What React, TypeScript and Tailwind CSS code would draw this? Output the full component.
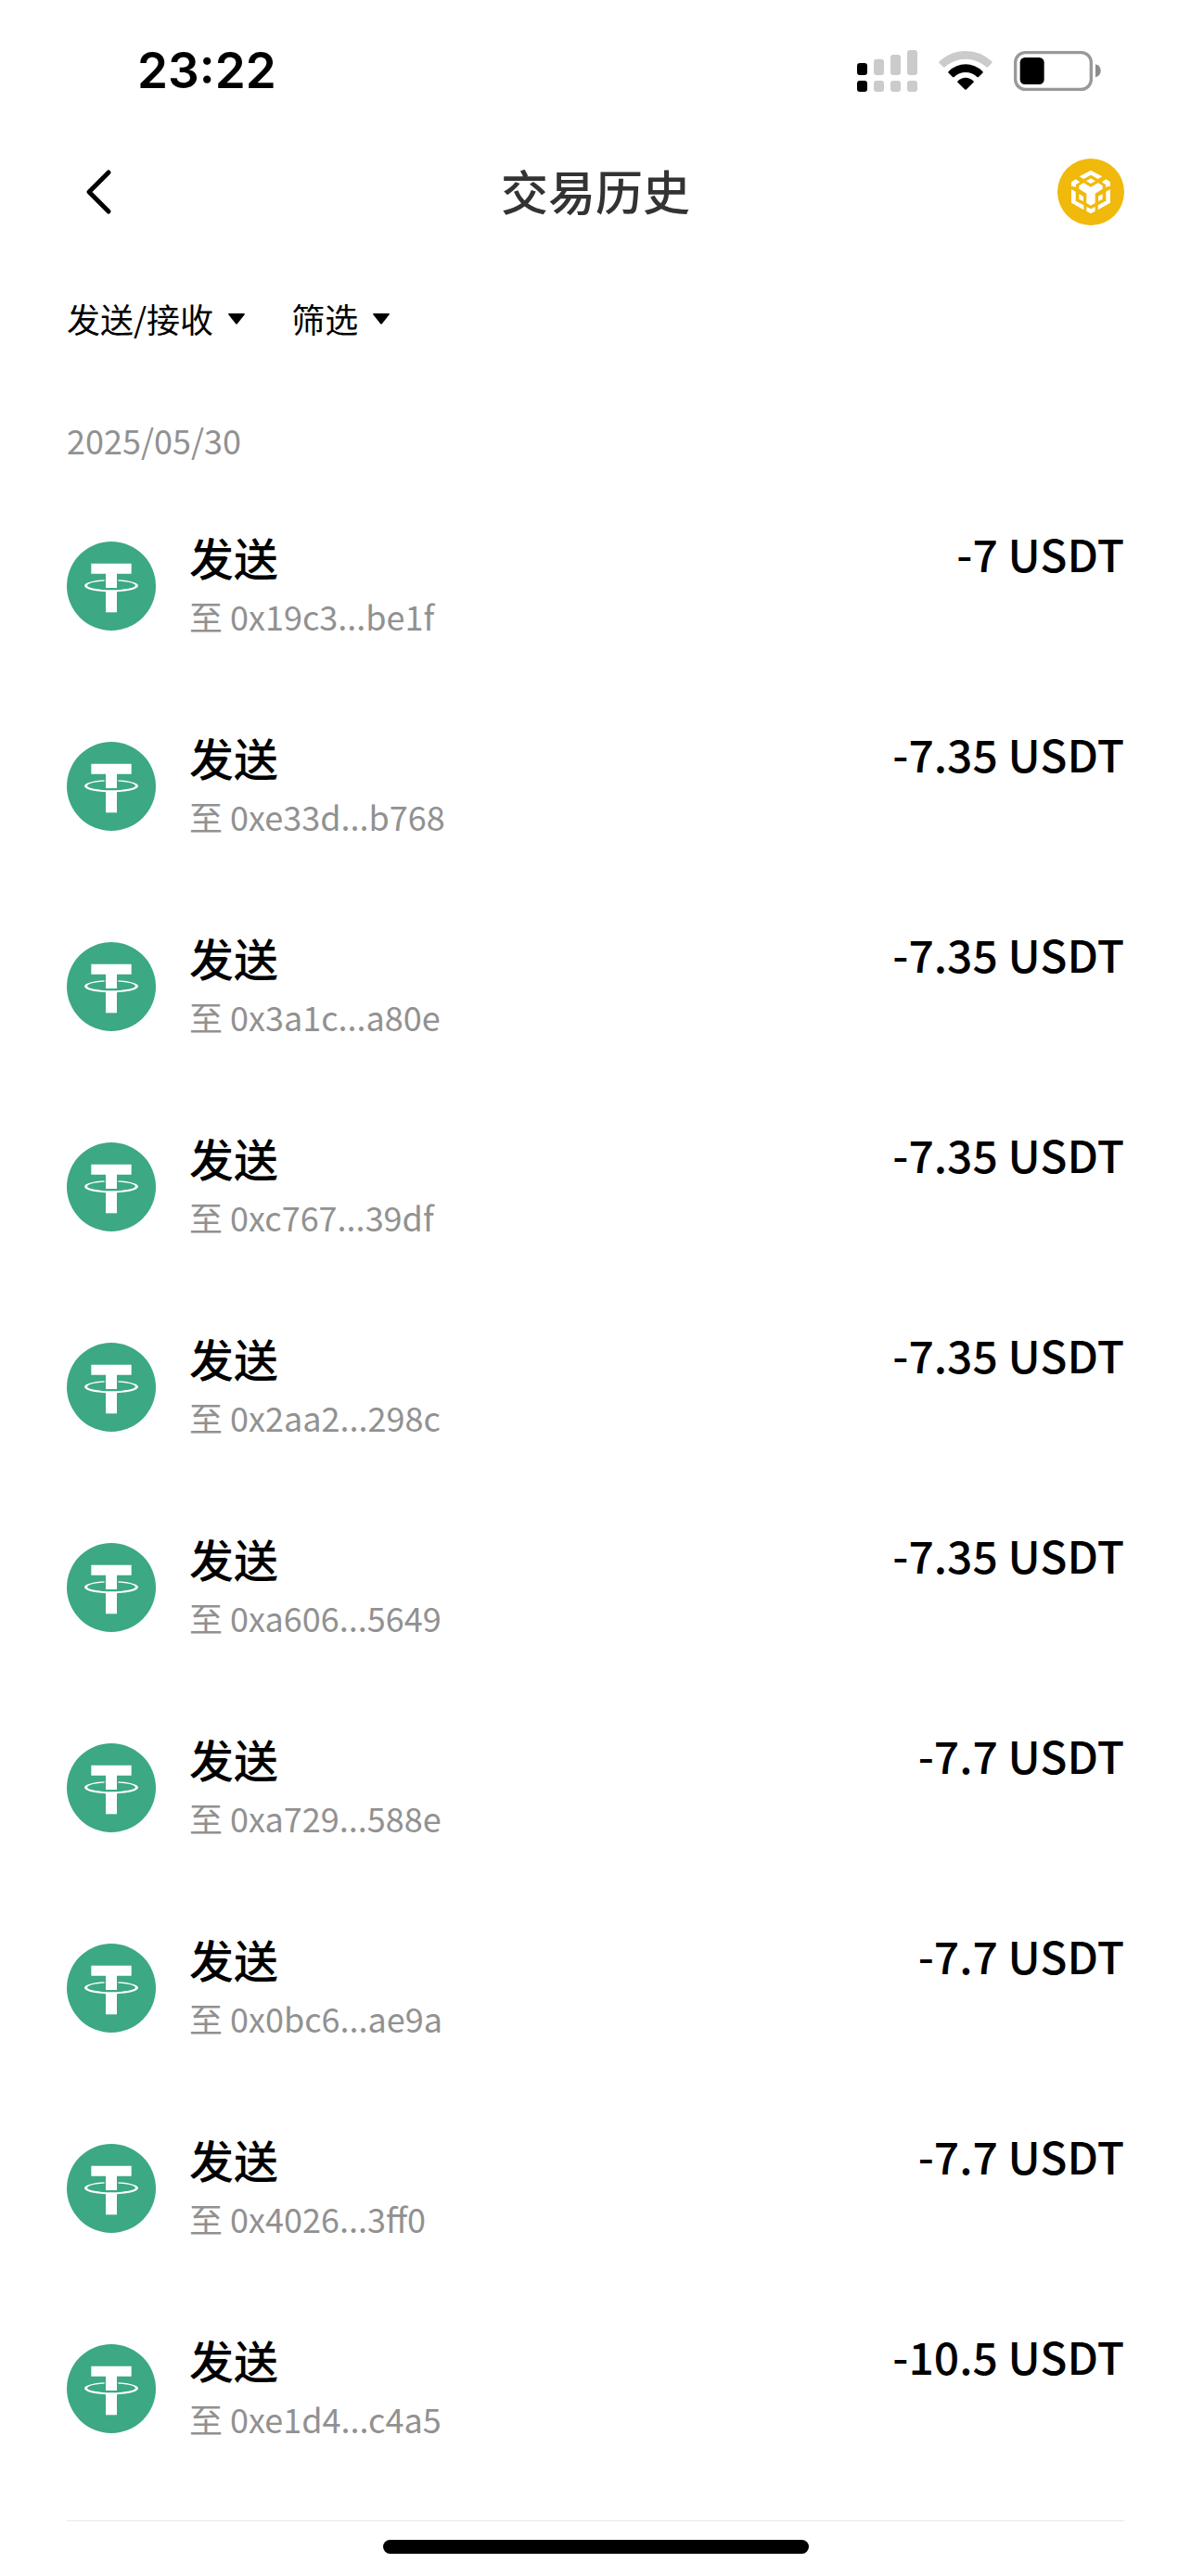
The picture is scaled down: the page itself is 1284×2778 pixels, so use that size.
import React from "react";

interface Transaction {
  address: string;
  amount: string;
}

const transactions: Transaction[] = [
  { address: "0x19c3...be1f", amount: "-7" },
  { address: "0xe33d...b768", amount: "-7.35" },
  { address: "0x3a1c...a80e", amount: "-7.35" },
  { address: "0xc767...39df", amount: "-7.35" },
  { address: "0x2aa2...298c", amount: "-7.35" },
  { address: "0xa606...5649", amount: "-7.35" },
  { address: "0xa729...588e", amount: "-7.7" },
  { address: "0x0bc6...ae9a", amount: "-7.7" },
  { address: "0x4026...3ff0", amount: "-7.7" },
  { address: "0xe1d4...c4a5", amount: "-10.5" },
];

const SignalIcon = () => (
  <svg className="w-[65px] h-[45px]" viewBox="0 0 195 135" aria-hidden="true">
    <g fill="#000">
      <rect x="0" y="42" width="33" height="39" rx="9" />
      <rect x="0" y="99" width="33" height="36" rx="9" />
    </g>
    <g fill="#cbcbcb">
      <rect x="54" y="29" width="33" height="52" rx="9" />
      <rect x="108" y="15" width="33" height="66" rx="9" />
      <rect x="162" y="0" width="33" height="81" rx="9" />
      <rect x="54" y="99" width="33" height="36" rx="9" />
      <rect x="108" y="99" width="33" height="36" rx="9" />
      <rect x="162" y="99" width="33" height="36" rx="9" />
    </g>
  </svg>
);

const WifiIcon = () => (
  <svg className="w-[58px] h-[42px]" viewBox="0 0 174 126" aria-hidden="true">
    <path
      fill="#cbcbcb"
      d="M2 34 Q38 0 87 0 Q136 0 172 34 Q174 37 172 39 L159 52 Q156 54 154 52 Q125 26 87 26 Q49 26 20 52 Q18 54 15 52 L2 39 Q0 37 2 34Z"
    />
    <path
      d="M32 66 Q56 43 87 43 Q118 43 142 66 Q145 69 142 71 L129 84 Q126 86 124 84 Q108 69 87 69 Q66 69 50 84 Q48 86 45 84 L32 71 Q29 69 32 66Z"
    />
    <path
      d="M62 97 Q73 86 87 86 Q101 86 112 97 Q115 100 112 102 L90 124 Q87 127 84 124 L62 102 Q59 100 62 97Z"
    />
  </svg>
);

const BatteryIcon = () => (
  <svg className="w-[94px] h-[43px]" viewBox="0 0 282 129" aria-hidden="true">
    <rect x="5" y="5" width="245" height="119" rx="32" fill="none" stroke="#999" strokeWidth="10" />
    <rect x="20" y="21" width="78" height="87" rx="16" />
    <path d="M264 43 Q281 48 281 64 Q281 80 264 85Z" fill="#8c8c8c" />
  </svg>
);

const BnbChainIcon = () => (
  <svg className="w-[72px] h-[72px]" viewBox="0 0 216 216" aria-hidden="true">
    <circle cx="108" cy="108" r="108" fill="#f0b90b" />
    <g fill="#fff">
      <path d="M108 38L145 58L131 66L108 53L85 66L71 58Z" />
      <path d="M108 64L123 73L108 81L93 73Z" />
      <path d="M45 76L59 67L73 76L60 84V92L45 89Z" />
      <path d="M171 76L157 67L143 76L156 84V92L171 89Z" />
      <path d="M70 87L85 79L108 92L131 79L146 87V98L122 113V144L108 152L94 144V113L70 98Z" />
      <path d="M70 115L84 122V138L70 131Z" />
      <path d="M146 115L132 122V138L146 131Z" />
      <path d="M45 99L59 107V137L85 151V166L45 143Z" />
      <path d="M171 99L157 107V137L131 151V166L171 143Z" />
      <path d="M94 156L108 163L122 156V170L108 178L94 170Z" />
    </g>
  </svg>
);

const TetherIcon = () => (
  <svg className="w-24 h-24 shrink-0" viewBox="0 0 288 288" aria-hidden="true">
    <circle cx="144" cy="144" r="144" fill="#3ca884" />
    <path
      fill="#fff"
      fillRule="evenodd"
      d="M57 143a87 20 0 1 0 174 0a87 20 0 1 0 -174 0ZM66 142a78 15 0 1 0 156 0a78 15 0 1 0 -156 0Z"
    />
    <path d="M122 104H166V151H122Z" fill="#3ca884" />
    <path d="M79 71H209V104H162V150H126V104H79Z" fill="#fff" />
    <path d="M126 160H162V229H126Z" fill="#fff" />
  </svg>
);

interface FilterSelectProps {
  label: string;
  options: string[];
}

const FilterSelect = ({ label, options }: FilterSelectProps) => (
  <label className="flex items-center gap-4">
    <select
      aria-label={label}
      className="appearance-none bg-transparent pb-0.5 text-[36px] leading-[54px] text-black outline-none field-sizing-content"
    >
      {options.map((option) => (
        <option key={option}>{option}</option>
      ))}
    </select>
    <svg className="w-[18px] h-3" viewBox="0 0 18 12" aria-hidden="true">
      <path d="M1 0H17Q18.500 0 17.500 1.500L10 11Q9 12 8 11L0.500 1.500Q-0.500 0 1 0Z" />
    </svg>
  </label>
);

const TransactionRow = ({ address, amount }: Transaction) => (
  <li className="flex items-center gap-9 h-[216px]">
    <TetherIcon />
    <div className="flex flex-1 items-start justify-between pb-1">
      <div>
        <p className="text-[48px] leading-[68px] font-medium text-black">发送</p>
        <p className="text-[36px] leading-[60px] text-[#919191]">至 {address}</p>
      </div>
      <p className="text-[48px] leading-[60px] font-medium text-black">{amount} USDT</p>
    </div>
  </li>
);

const App = () => {
  return (
    <div className="min-h-screen bg-white font-['Noto_Sans_CJK_SC',sans-serif]">
      {/* Status bar */}
      <div className="flex items-center justify-between h-[152px] pl-[148px] pr-[97px]">
        <span className="pt-0.5 font-['Inter',sans-serif] text-[53px] font-semibold text-black">23:22</span>
        <div className="flex items-center gap-[23px]">
          <SignalIcon />
          <WifiIcon />
          <BatteryIcon />
        </div>
      </div>

      {/* Header */}
      <header className="grid grid-cols-[1fr_auto_1fr] items-center h-[110px] px-[72px]">
        <button type="button" aria-label="返回" className="justify-self-start pl-5">
          <svg className="w-[30px] h-[50px]" viewBox="0 0 30 50" fill="none" aria-hidden="true">
            <path
              d="M25 4L4 25L25 46"
              stroke="#000"
              strokeWidth="5"
              strokeLinecap="round"
              strokeLinejoin="round"
            />
          </svg>
        </button>
        <h1 className="pb-1 text-[51px] leading-[76px] font-medium text-[#333]">交易历史</h1>
        <button type="button" aria-label="BNB Chain" className="justify-self-end">
          <BnbChainIcon />
        </button>
      </header>

      {/* Filters */}
      <div className="flex items-center gap-[50px] h-[164px] px-[72px]">
        <FilterSelect label="发送/接收" options={["发送/接收", "发送", "接收"]} />
        <FilterSelect label="筛选" options={["筛选"]} />
      </div>

      <main className="px-[72px]">
        <h2 className="pb-0.5 text-[36px] leading-[96px] text-[#919191]">2025/05/30</h2>
        <ul className="pb-[34px] border-b border-[#e8e8e8]">
          {transactions.map((tx) => (
            <TransactionRow key={tx.address} {...tx} />
          ))}
        </ul>
      </main>

      {/* Home indicator */}
      <div className="flex justify-center pt-5 pb-6">
        <div className="w-[459px] h-[15px] rounded-full bg-black" />
      </div>
    </div>
  );
};

export default App;
